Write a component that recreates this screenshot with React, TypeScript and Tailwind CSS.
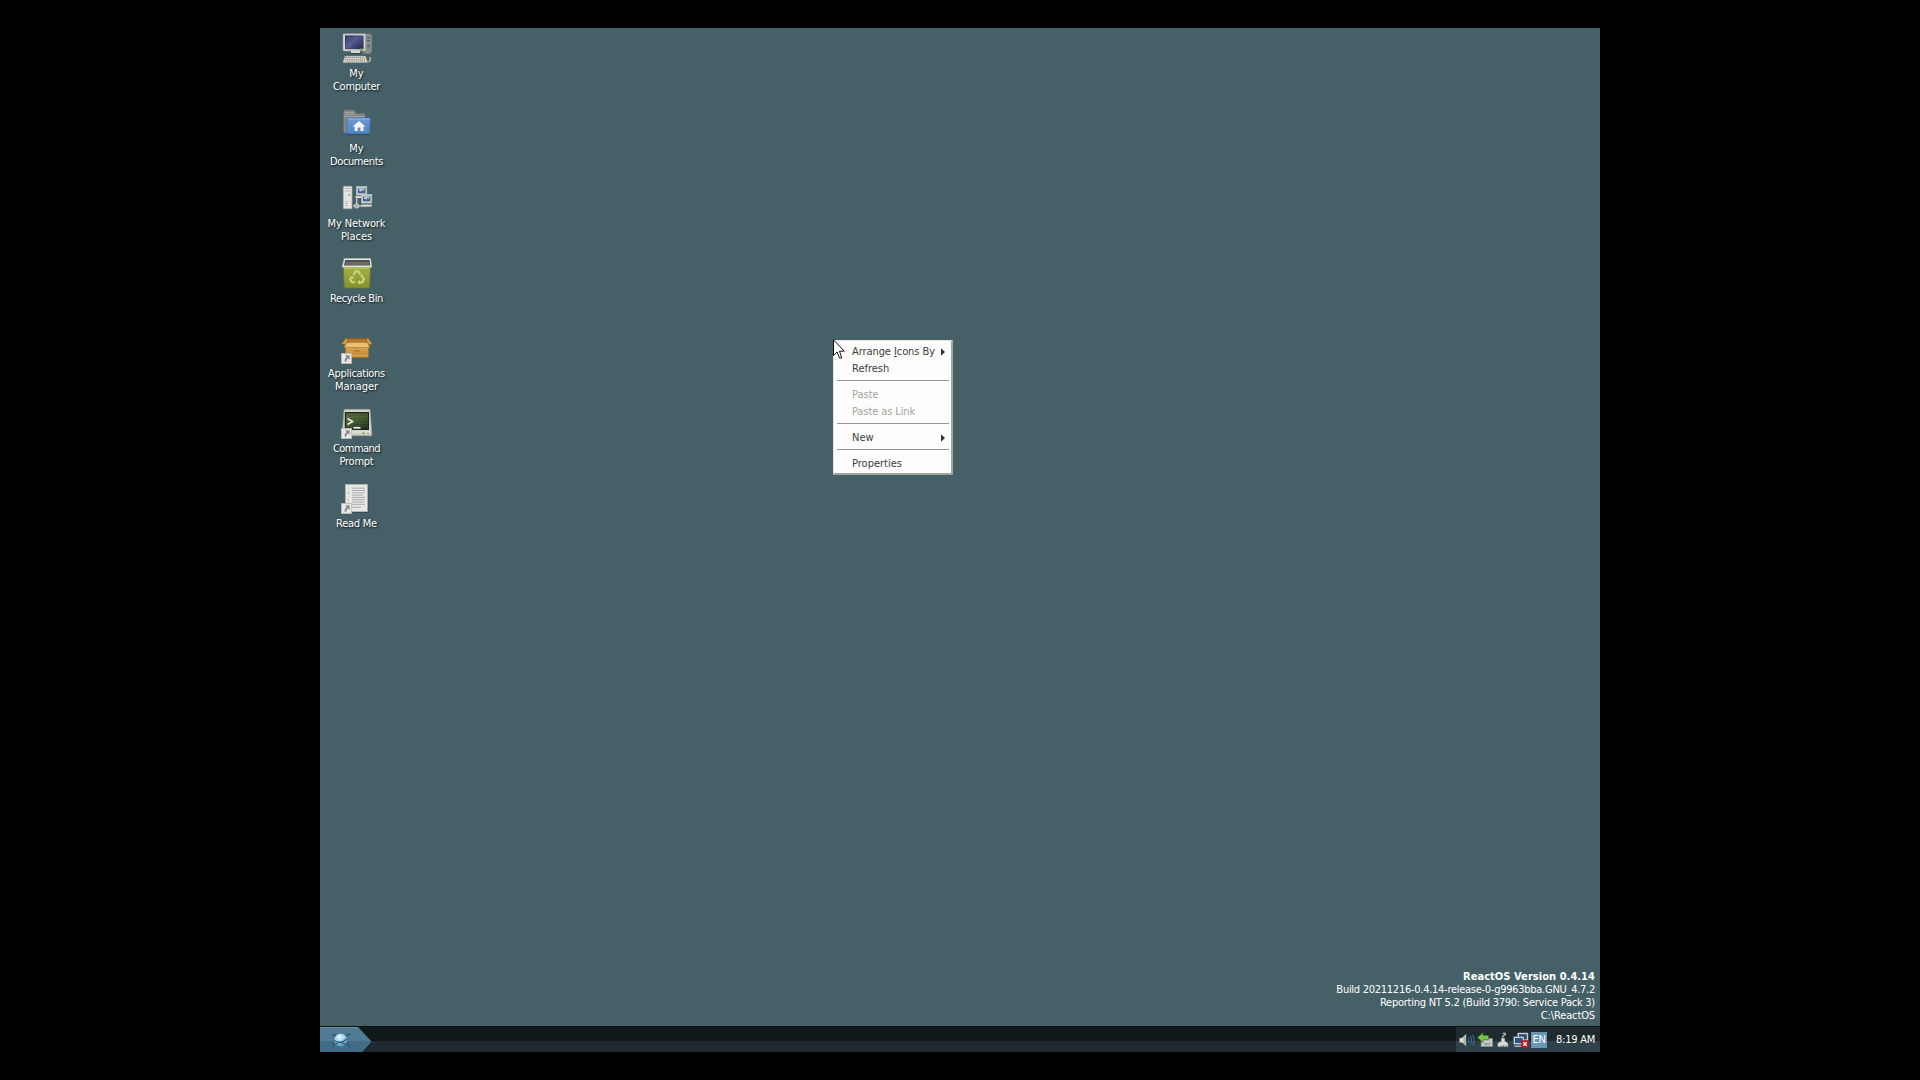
import type { ReactNode } from "react";

const Svg32 = ({ children }: { children: ReactNode }) => (
  <svg viewBox="0 0 32 32" className="block h-8 w-8 shrink-0">
    {children}
  </svg>
);

const ShortcutArrow = () => (
  <g>
    <rect x="0.4" y="21.4" width="10.2" height="10.2" fill="#e9e9e7" stroke="#b9b9b5" strokeWidth="0.8" />
    <path d="M4 23.3h4.7V28L7.2 26.5C5.8 27.4 5.2 28.6 5.3 30L3.6 29.6C3.3 27.8 4 26.1 5.5 24.9Z" fill="#8b8d8c" />
  </g>
);

function ComputerIcon() {
  return (
    <Svg32>
      <defs>
        <linearGradient id="crt" x1="0" y1="0" x2="1" y2="1">
          <stop offset="0" stopColor="#25285c" />
          <stop offset="0.5" stopColor="#4d5288" />
          <stop offset="1" stopColor="#23264f" />
        </linearGradient>
      </defs>
      <path d="M22 1.5h7l2 2V20l-2 2h-8V4Z" fill="#868d8e" stroke="#5f686b" strokeWidth="0.6" />
      <path d="M26 5h3v1.3h-3zM26 8h3v1.3h-3z" fill="#555c5e" />
      <circle cx="27.5" cy="14" r="1.2" fill="#555e61" />
      <rect x="2" y="1.8" width="22.5" height="17.2" rx="1" fill="#d5d5d2" stroke="#a5a39e" strokeWidth="0.5" />
      <rect x="4" y="3.4" width="18.6" height="13.8" fill="url(#crt)" />
      <path d="M5 4.4h13L9 16H5Z" fill="#7177a7" opacity="0.35" />
      <path d="M10 19h9v2h-9z" fill="#d9d8d5" />
      <path d="M9 21h11v1H9z" fill="#383d40" />
      <path d="M19 16.5h3v2.2h-3z" fill="#6fa84c" />
      <path d="M20 20c3-1 4 1 3 3" fill="none" stroke="#3d474b" strokeWidth="0.8" />
      <path d="M4 24h20.5l2 5.5v1.2H2v-1.2Z" fill="#dad8d2" stroke="#827f7a" strokeWidth="0.5" />
      <path d="M4.5 25.5h19M4 27.3h20M4 29h21" stroke="#8d8983" strokeWidth="1" strokeDasharray="1.4 0.7" />
      <path d="M28 25h2.2v4l-1.5 1.5h-2V29h1.3Z" fill="#9b9a95" />
    </Svg32>
  );
}

function DocumentsIcon() {
  return (
    <Svg32>
      <defs>
        <linearGradient id="folder" x1="0" y1="0" x2="0" y2="1">
          <stop offset="0" stopColor="#6b98cf" />
          <stop offset="1" stopColor="#5485c2" />
        </linearGradient>
      </defs>
      <path d="M2.5 26V4.5L4 3h9.5l1.5 3.5h9V26Z" fill="#868783" stroke="#696d6d" strokeWidth="0.7" />
      <path d="M3.5 5.5h10M3.5 7.5h10M3.5 9.5h20" stroke="#aaa9a4" strokeWidth="0.8" />
      <path d="M6.3 11h23l-1 15.7H5.2Z" fill="url(#folder)" stroke="#3e70b5" strokeWidth="0.8" />
      <path d="M6.9 12h21.5" stroke="#a2c4ed" strokeWidth="0.8" />
      <path d="M5 27.8h23.5" stroke="#34474d" strokeWidth="0.8" />
      <path d="m18 14 6.5 5.4h-2V24h-3v-3.5h-2.8V24h-3v-4.6h-2.2Z" fill="#eef4fb" />
    </Svg32>
  );
}

function SmallMonitor({ x, y }: { x: number; y: number }) {
  return (
    <g transform={`translate(${x} ${y})`}>
      <rect x="0.4" y="0.4" width="10.4" height="8.6" fill="#e3e3df" stroke="#b5b5b0" strokeWidth="0.7" />
      <rect x="1.8" y="1.8" width="7.7" height="5.6" fill="#3f6590" />
      <path d="M2.5 2.3h6.2L8 5 6.5 4 5 5.8 3.2 4.5Z" fill="#b4cbdd" />
    </g>
  );
}

function NetworkIcon() {
  return (
    <Svg32>
      <rect x="2.3" y="4.3" width="8.7" height="22.5" rx="0.8" fill="#e5e4e0" stroke="#a9a8a3" strokeWidth="0.7" />
      <path d="M4 6.5h5.5M4 9h5.5" stroke="#b8b7b1" strokeWidth="1" />
      <path d="M4 19.5h3M4 21.5h3M4 23.5h3" stroke="#b9b8b2" strokeWidth="0.9" />
      <rect x="7.6" y="12.3" width="1.6" height="1.6" fill="#7a9d65" />
      <path d="M15.7 14v9M12 24h10" stroke="#c6c7c3" strokeWidth="1.4" />
      <path d="M14 22h3.5v4H14z" fill="#a6aaa9" stroke="#e1e1de" strokeWidth="0.6" />
      <path d="M14.5 14h6v2h-6z" fill="#d8d8d4" />
      <SmallMonitor x={15} y={4} />
      <SmallMonitor x={20} y={12} />
      <path d="M20.5 22.5h10.2v2.3H20z" fill="#dcdbd6" stroke="#92938f" strokeWidth="0.5" />
    </Svg32>
  );
}

function RecycleIcon() {
  return (
    <Svg32>
      <defs>
        <linearGradient id="bin" x1="0" y1="0" x2="0" y2="1">
          <stop offset="0" stopColor="#a3b043" />
          <stop offset="1" stopColor="#85922d" />
        </linearGradient>
      </defs>
      <path d="M2.3 10h27.2l-.9 21H3.3Z" fill="url(#bin)" stroke="#687726" strokeWidth="0.8" />
      <path d="M3.2 1.6h26.4l1.2 8.6H1.1Z" fill="#eeeee5" stroke="#b4b6a4" strokeWidth="0.6" />
      <path d="M4.2 3h24.3l.8 5.5H2.9Z" fill="#4d504f" />
      <path d="M5 5h23v3.5H4Z" fill="#85857f" opacity="0.5" />
      <path d="M3.3 11.2h25.2" stroke="#c2cf6b" strokeWidth="0.8" />
      <g fill="none" stroke="#c8d183" strokeWidth="2.2">
        <path d="m12.4 18 2.3-3.7h2.6l1.8 3" />
        <path d="m21.1 19.2 1.8 3-1.6 3.2h-3.4" />
        <path d="M14 25.2h-3.2l-1.7-3 1.6-2.7" />
      </g>
      <path d="m18 19 4-2-.5 3.2ZM19 23v4.5l-3-2.3ZM8.5 19.7l4.5-.4-1 3.3Z" fill="#c8d183" />
    </Svg32>
  );
}

function PackageIcon() {
  return (
    <Svg32>
      <defs>
        <linearGradient id="box" x1="0" y1="0" x2="0" y2="1">
          <stop offset="0" stopColor="#dfa854" />
          <stop offset="1" stopColor="#c28734" />
        </linearGradient>
      </defs>
      <path d="M5 6h22v8H5Z" fill="#8f5b17" />
      <path d="M6 7.2h20l-2 4H8Z" fill="#b57a2b" />
      <path d="M4.5 13h23v12.5H4.5Z" fill="url(#box)" stroke="#a36e21" strokeWidth="0.7" />
      <path d="M4.9 6 .5 12l3.5.8L7.2 8ZM27.1 6l4.4 6-3.5.8L24.8 8Z" fill="#d69d4c" stroke="#8a5a17" strokeWidth="0.6" />
      <path d="M5.5 10.5h21l2.2 5H3.3Z" fill="#ebbf76" stroke="#b57c2b" strokeWidth="0.7" />
      <path d="M12.5 19h7" stroke="#a67024" strokeWidth="1" />
      <path d="M5.5 23.7h21" stroke="#e6b368" strokeWidth="0.8" />
      <ShortcutArrow />
    </Svg32>
  );
}

function TerminalIcon() {
  return (
    <Svg32>
      <defs>
        <linearGradient id="term" x1="0" y1="0" x2="0.7" y2="1">
          <stop offset="0" stopColor="#53663e" />
          <stop offset="0.5" stopColor="#44592f" />
          <stop offset="1" stopColor="#20321d" />
        </linearGradient>
      </defs>
      <path d="M3 2.3h26l1.8 22.5v4H1.3v-4Z" fill="#d2d2cc" stroke="#94958f" strokeWidth="0.7" />
      <rect x="3.8" y="5" width="24.2" height="18" fill="#20281c" />
      <rect x="5" y="6.2" width="22" height="15.6" fill="url(#term)" />
      <path d="M5 10h22M5 13h22M5 16h22M5 19h22" stroke="#809269" strokeWidth="0.6" opacity="0.5" />
      <path d="m6.5 11.5 5 3-5 3" fill="none" stroke="#e7ecdc" strokeWidth="1.6" />
      <path d="M12.5 20.8h7" stroke="#edf0e5" strokeWidth="1.7" />
      <path d="M2 25h28" stroke="#f0f0ea" strokeWidth="0.8" />
      <path d="M21 26.2h3" stroke="#73ae3f" strokeWidth="1.4" />
      <circle cx="27" cy="26.2" r="0.8" fill="#858880" />
      <ShortcutArrow />
    </Svg32>
  );
}

function ReadMeIcon() {
  return (
    <Svg32>
      <path d="M27 4v26.5H6" fill="none" stroke="#354c52" strokeWidth="1" />
      <rect x="4.4" y="2.4" width="22" height="27.2" fill="#e8e8e5" stroke="#b4b4af" strokeWidth="0.8" />
      <path d="M7.5 3v26" stroke="#d3d3cf" strokeWidth="0.5" />
      <path d="M6.8 11h1M6.8 18h1" stroke="#999" strokeWidth="1" />
      <path
        d="M11 6.2h13M11 8.5h13M11 10.8h13M11 13.1h11M11 15.4h13M11 17.7h13M11 20h12M11 22.3h13M11 25.3h9"
        stroke="#a4a4a0"
        strokeWidth="0.9"
      />
      <ShortcutArrow />
    </Svg32>
  );
}

type Line = [text: string, tracking: string];

const shortcuts: { icon: ReactNode; lines: Line[] }[] = [
  { icon: <ComputerIcon />, lines: [["My", "tracking-[0px]"], ["Computer", "tracking-[-0.27px]"]] },
  { icon: <DocumentsIcon />, lines: [["My", "tracking-[0px]"], ["Documents", "tracking-[-0.38px]"]] },
  { icon: <NetworkIcon />, lines: [["My Network", "tracking-[-0.09px]"], ["Places", "tracking-[-0.08px]"]] },
  { icon: <RecycleIcon />, lines: [["Recycle Bin", "tracking-[-0.36px]"]] },
  { icon: <PackageIcon />, lines: [["Applications", "tracking-[-0.29px]"], ["Manager", "tracking-[-0.06px]"]] },
  { icon: <TerminalIcon />, lines: [["Command", "tracking-[-0.56px]"], ["Prompt", "tracking-[-0.25px]"]] },
  { icon: <ReadMeIcon />, lines: [["Read Me", "tracking-[-0.23px]"]] },
];

function MenuItem({ children, disabled, submenu }: { children: ReactNode; disabled?: boolean; submenu?: boolean }) {
  return (
    <div className={`flex h-[17px] items-center justify-between pr-[4px] pl-[16px] ${disabled ? "text-[#a3a3a0]" : "text-[#3c3c3c]"}`}>
      <span className="leading-[13px] whitespace-nowrap">{children}</span>
      {submenu && (
        <svg viewBox="0 0 4 8" className="h-2 w-1">
          <path d="M0 0.3 4 4 0 7.7Z" fill="#333" />
        </svg>
      )}
    </div>
  );
}

const Separator = () => (
  <div className="h-[9px] pt-[3px] pl-px">
    <div className="h-px w-full bg-[#97979a]" />
  </div>
);

function ContextMenu() {
  return (
    <div className="absolute top-[312px] left-[513px] flex h-[135px] w-[120px] flex-col border-t border-r-2 border-b-2 border-l border-t-[#e6e4df] border-r-[#a3a3a0] border-b-[#a3a3a0] border-l-[#e6e4df] bg-[#fdfdfc] px-[2px] pt-[2px]">
      <MenuItem submenu>
        <span className="tracking-[-0.08px]">
          Arrange <u className="underline decoration-1 underline-offset-1">I</u>cons By
        </span>
      </MenuItem>
      <MenuItem>Refresh</MenuItem>
      <Separator />
      <MenuItem disabled>Paste</MenuItem>
      <MenuItem disabled>
        <span className="tracking-[-0.1px]">Paste as Link</span>
      </MenuItem>
      <Separator />
      <MenuItem submenu>New</MenuItem>
      <Separator />
      <MenuItem>Properties</MenuItem>
    </div>
  );
}

const Cursor = () => (
  <svg viewBox="0 0 12 21" className="absolute top-[311px] left-[513px] h-[21px] w-3">
    <path d="M.5.8v15.7l3.6-3.5 2.4 6h2.3L6.5 12.2h4.8Z" fill="#fff" stroke="#111" strokeWidth="1" />
  </svg>
);

function StartButton() {
  return (
    <div className="h-[25px] w-[52px]">
      <svg viewBox="0 0 52 25" className="block h-full w-full">
        <defs>
          <radialGradient id="orb" cx="0.4" cy="0.25" r="0.8">
            <stop offset="0" stopColor="#e9f8fd" />
            <stop offset="0.45" stopColor="#a0d0e4" />
            <stop offset="1" stopColor="#4188ab" />
          </radialGradient>
        </defs>
        <path d="M0 0h38l13.5 14.5L42 25H0Z" fill="#507b95" />
        <path d="M0 14h51l-9 11H0Z" fill="#416c87" />
        <path d="M0 .5h38" stroke="#6b91a6" />
        <g fill="none" stroke="#3a5468" strokeWidth="1.6">
          <path d="M12.5 7.5c5 1 14 7 17.5 12.5M30 7C24.500 9 15 14 12.500 20" />
        </g>
        <circle cx="20.800" cy="13.200" r="6.500" fill="url(#orb)" />
        <path d="M14.500 13.500c3 2.500 8 2.300 12.500-1.500M15.800 17c3-3 7-1.500 10 .500" fill="none" stroke="#2d6080" strokeWidth="1.200" />
      </svg>
    </div>
  );
}

const SpeakerIcon = () => (
  <svg viewBox="0 0 16 16" className="h-4 w-4">
    <path d="M.5 6h2.500L7 2v12L3 10.500H.5Z" fill="#d9dcdc" stroke="#777f83" strokeWidth="0.6" />
    <path d="M5.200 4v8" stroke="#7c8588" strokeWidth="0.8" />
    <path d="M9 5.500q1.800 2.500 0 5.300M11.300 4q2.500 4 0 8.300M13.500 2.700q3.300 5.200 0 10.800" fill="none" stroke="#3f6a98" strokeWidth="1.1" />
  </svg>
);

const EjectIcon = () => (
  <svg viewBox="0 0 16 16" className="h-4 w-4">
    <path d="M4.500 6.500h11v8H4Z" fill="#c7cac7" stroke="#878d8b" strokeWidth="0.7" />
    <path d="M7 12h6" stroke="#707977" strokeWidth="1" />
    <path d="M.6 5.500 6 .8v2.700h5.500v4.300H6v2.700Z" fill="#7cc444" stroke="#397f22" strokeWidth="0.8" />
  </svg>
);

const BrushIcon = () => (
  <svg viewBox="0 0 12 16" className="h-4 w-3">
    <path d="M5.800 6.500V4.200c0-1 2.800-.6 2.800-2 0-1.300-2.800-1.200-2.800-.4" fill="none" stroke="#b7bcbc" strokeWidth="1.2" />
    <path d="M4.300 6.300h3.500v3l3.200 2v3.500H9.500V13l-1 1.800H7V13l-1 1.800H4.500V13l-1 1.800H.8v-3.500l3.500-2Z" fill="#d9dcda" stroke="#858d8e" strokeWidth="0.5" />
  </svg>
);

const OfflineIcon = () => (
  <svg viewBox="0 0 16 16" className="h-4 w-4">
    <rect x="4.5" y="0.8" width="10.7" height="8" fill="#c9d0d6" />
    <rect x="6" y="2.2" width="7.8" height="5.2" fill="#2a4a78" />
    <rect x="0.5" y="4.5" width="10.5" height="8" fill="#d3d9de" stroke="#45525c" strokeWidth="0.4" />
    <rect x="1.9" y="5.9" width="7.8" height="5.2" fill="#2e5384" />
    <path d="M1.500 14.200h7" stroke="#cdd3d5" strokeWidth="1.200" />
    <rect x="8.200" y="8.200" width="7.600" height="7.600" rx="0.8" fill="#bd171e" />
    <path d="m10.300 10.300 3.400 3.400m0-3.400-3.400 3.400" stroke="#fff" strokeWidth="1.3" />
  </svg>
);

function Taskbar() {
  return (
    <div className="flex h-[26px] items-stretch border-t border-[#0b1012] bg-linear-to-b from-[#10181c] from-54% to-[#20292f] to-54%">
      <StartButton />
      <div className="flex-1" />
      <div className="flex w-[144px] items-center bg-linear-to-b from-[#1f2a2f] from-54% to-[#2f424a] to-54% pl-[3px]">
        <SpeakerIcon />
        <div className="ml-[2px]">
          <EjectIcon />
        </div>
        <div className="ml-[4px]">
          <BrushIcon />
        </div>
        <div className="ml-[4px]">
          <OfflineIcon />
        </div>
        <div className="ml-[2px] flex h-4 w-4 items-center justify-center bg-[#6797b7] pb-px tracking-[-0.3px]">EN</div>
        <div className="ml-[9px] pb-px tracking-[-0.24px] whitespace-nowrap">8:19 AM</div>
      </div>
    </div>
  );
}

export default function App() {
  return (
    <div className="flex h-[1080px] w-[1920px] justify-center overflow-hidden bg-black pt-[28px] font-['DejaVu_Sans_Condensed','DejaVu_Sans',sans-serif] text-[11px] leading-[13px] text-white">
      <div className="relative flex h-[1024px] w-[1280px] flex-col bg-[#466067]">
        <div className="flex min-h-0 flex-1 justify-between">
          <div className="flex w-[74px] flex-col">
            {shortcuts.map(({ icon, lines }, i) => (
              <div key={i} className="flex h-[75px] flex-col items-center pt-1">
                {icon}
                <div className="mt-[3px] flex flex-col items-center pr-px text-shadow-[1px_1px_2px_#000000cc]">
                  {lines.map(([text, tracking]) => (
                    <span key={text} className={`whitespace-nowrap ${tracking}`}>
                      {text}
                    </span>
                  ))}
                </div>
              </div>
            ))}
          </div>
          <div className="flex flex-col items-end self-end pr-[5px] pb-[4px] whitespace-nowrap">
            <span className="font-bold tracking-[0.05px]">ReactOS Version 0.4.14</span>
            <span className="tracking-[-0.27px]">Build 20211216-0.4.14-release-0-g9963bba.GNU_4.7.2</span>
            <span className="tracking-[-0.24px]">Reporting NT 5.2 (Build 3790: Service Pack 3)</span>
            <span className="tracking-[-0.13px]">C:\ReactOS</span>
          </div>
        </div>
        <Taskbar />
        <ContextMenu />
        <Cursor />
      </div>
    </div>
  );
}
